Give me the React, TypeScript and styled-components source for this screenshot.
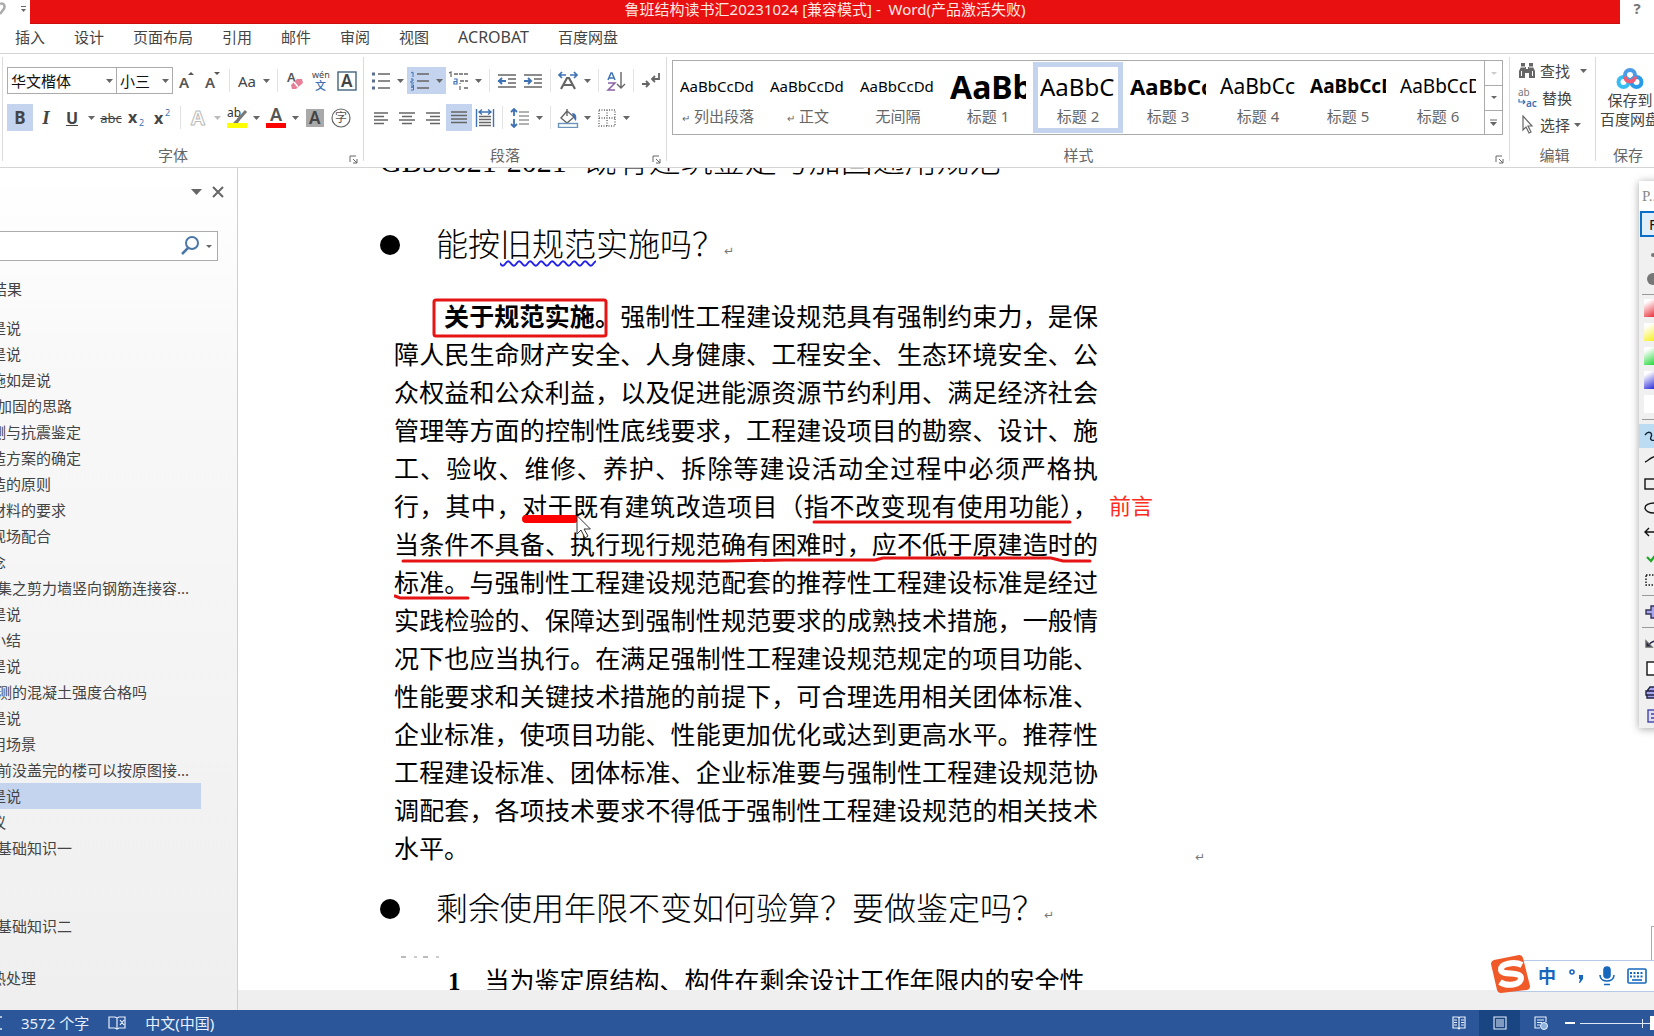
import React from 'react';
import styled, { createGlobalStyle, css } from 'styled-components';

const UI_FONT = '"Noto Sans", "Noto Sans CJK SC", sans-serif';
const DOC_FONT = '"Liberation Serif", "Noto Sans CJK SC", serif';

const color = {
  ink: '#444',
  muted: '#666',
  line: '#d4d4d4',
  frame: '#ababab',
  active: '#c5d4ee',
  blue: '#3f72b5',
  red: '#e61414',
  status: '#2b579a',
  statusActive: '#1a4583',
};

const GlobalStyle = createGlobalStyle`
  * { box-sizing: border-box; }
  html, body { margin: 0; height: 100%; overflow: hidden; background: #fff; }
  button, input, select { font: inherit; color: inherit; }
  button { border: 0; padding: 0; background: none; }
  ul { list-style: none; margin: 0; padding: 0; }
  p, h2 { margin: 0; font-weight: inherit; }
`;

const Shell = styled.div`
  height: 100vh;
  display: flex;
  flex-direction: column;
  overflow: hidden;
  font: 15px/20px ${UI_FONT};
  color: ${color.ink};
`;

/* ---------- title bar ---------- */
const TitleBar = styled.header`
  display: flex;
  flex: none;
  height: 24px;
`;
const QuickAccess = styled.div`
  flex: none;
  width: 30px;
  height: 20px;
  display: flex;
  justify-content: space-between;
`;
const Title = styled.div`
  flex: 1;
  background: #e81010;
  color: #ffe9e4;
  line-height: 18px;
  text-align: center;
  white-space: pre;
  border-bottom: 1px solid #c90c0c;
`;
const HelpButton = styled.button`
  flex: none;
  width: 34px;
  height: 16px;
  line-height: 16px;
  font-weight: 700;
  color: #777;
`;

/* ---------- tabs ---------- */
const Tabs = styled.nav`
  flex: none;
  display: flex;
  gap: 29px;
  height: 29px;
  padding: 0 0 4px 15px;
  align-items: center;
`;
const Tab = styled.button<{ $latin?: boolean }>`
  line-height: 24px;
  font-size: ${p => (p.$latin ? 16 : 15)}px;
  white-space: nowrap;
`;

/* ---------- ribbon ---------- */
const Ribbon = styled.section`
  flex: none;
  display: flex;
  height: 115px;
  padding-left: 2px;
  border-top: 1px solid ${color.line};
  border-bottom: 1px solid ${color.line};
  background: #fff;
`;
const Divider = styled.div`
  flex: none;
  width: 1px;
  margin: 3px 0 6px;
  background: #dcdcdc;
`;
const Group = styled.div<{ $w?: number; $pad?: string }>`
  display: flex;
  flex-direction: column;
  min-width: 0;
  ${p => (p.$w ? css`flex: none; width: ${p.$w}px;` : css`flex: 1;`)}
  padding: ${p => p.$pad ?? '13px 0 3px 4px'};
`;
const ToolRow = styled.div`
  display: flex;
  height: 27px;
  margin-bottom: 10px;
`;
const GroupFoot = styled.div`
  display: flex;
  align-items: center;
  height: 18px;
  margin-top: auto;
  color: ${color.muted};
  text-align: center;
`;
const GroupLabel = styled.span`
  flex: 1;
  padding-right: 4px;
`;
const Launcher = styled.button`
  width: 20px;
  height: 14px;
`;
const Tool = styled.button<{ $active?: boolean; $menu?: boolean }>`
  flex: none;
  display: grid;
  grid-template-columns: ${p => (p.$menu ? '26px 13px' : '26px')};
  align-items: center;
  justify-items: center;
  height: 27px;
  background: ${p => (p.$active ? color.active : 'transparent')};
`;
const Split = styled.div`
  flex: none;
  width: 1px;
  margin: 2px 4px;
  background: #e2e2e2;
`;
const Glyph = styled.span<{ $size?: number; $bold?: boolean; $italic?: boolean; $line?: string }>`
  font-size: ${p => p.$size ?? 18}px;
  line-height: 22px;
  font-weight: ${p => (p.$bold ? 700 : 400)};
  font-style: ${p => (p.$italic ? 'italic' : 'normal')};
  font-family: ${p => (p.$italic ? '"Liberation Serif", serif' : UI_FONT)};
  text-decoration: ${p => p.$line ?? 'none'};
`;
const Combo = styled.label<{ $w: number }>`
  flex: none;
  display: flex;
  align-items: center;
  width: ${p => p.$w}px;
  padding-right: 3px;
  border: 1px solid ${color.frame};
  & + & { border-left: 0; }
`;
const ComboSelect = styled.select`
  appearance: none;
  flex: 1;
  min-width: 0;
  height: 24px;
  padding: 0 0 0 3px;
  border: 0;
  background: none;
  color: #111;
`;

/* ---------- styles gallery ---------- */
const Gallery = styled.div`
  display: flex;
  width: 831px;
  height: 75px;
  border: 1px solid ${color.frame};
`;
const StyleItem = styled.button<{ $active?: boolean }>`
  flex: none;
  width: 90px;
  height: 71px;
  margin-top: 1px;
  border: 5px solid ${p => (p.$active ? color.active : 'transparent')};
  display: flex;
  flex-direction: column;
  align-items: center;
`;
const Preview = styled.span<{ $size: number; $bold?: boolean }>`
  width: 76px;
  height: 39px;
  line-height: 39px;
  overflow: hidden;
  white-space: nowrap;
  text-align: left;
  color: #000;
  font-size: ${p => p.$size}px;
  font-weight: ${p => (p.$bold ? 700 : 400)};
`;
const StyleName = styled.span`
  line-height: 20px;
  white-space: nowrap;
  color: ${color.muted};
`;
const StyleMark = styled.span`
  font-size: 10px;
  margin-right: 4px;
`;
const GalleryScroll = styled.div`
  margin-left: auto;
  width: 18px;
  display: grid;
  grid-template-rows: repeat(3, 1fr);
  border-left: 1px solid ${color.frame};
`;
const ScrollButton = styled.button`
  display: grid;
  place-items: center;
  & + & { border-top: 1px solid ${color.frame}; }
`;

/* ---------- edit + save ---------- */
const EditItem = styled.button`
  display: flex;
  align-items: center;
  gap: 4px;
  height: 27px;
  white-space: nowrap;
`;
const EditLabel = styled.span<{ $wide?: boolean }>`
  padding-right: ${p => (p.$wide ? 6 : 0)}px;
`;
const SaveButton = styled.button`
  display: flex;
  flex-direction: column;
  align-items: center;
  line-height: 19px;
  white-space: nowrap;
`;

/* ---------- navigation pane ---------- */
const Main = styled.div`
  flex: 1;
  min-height: 0;
  display: flex;
  position: relative;
`;
const NavPane = styled.aside`
  flex: none;
  width: 238px;
  overflow: hidden;
  border-right: 1px solid #cfcfcf;
  background: linear-gradient(#fff, #f8f8f8 25%, #efefef);
`;
const NavHead = styled.div`
  display: flex;
  justify-content: flex-end;
  align-items: center;
  gap: 9px;
  height: 48px;
  padding-right: 12px;
`;
const CloseButton = styled.button`
  display: grid;
  place-items: center;
`;
const SearchBox = styled.label`
  display: flex;
  align-items: center;
  gap: 6px;
  width: 218px;
  height: 30px;
  margin-top: 15px;
  padding-right: 5px;
  border: 1px solid ${color.frame};
  border-left: 0;
  background: #fff;
`;
const SearchInput = styled.input`
  flex: 1;
  min-width: 0;
  border: 0;
  outline: 0;
  background: none;
`;
const NavTab = styled.button`
  display: block;
  height: 26px;
  margin: 15px 0 13px -8px;
`;
const NavItem = styled.li<{ $deep?: boolean; $active?: boolean }>`
  height: 26px;
  line-height: 26px;
  width: 210px;
  margin-left: -9px;
  padding-left: ${p => (p.$deep ? 6 : 0)}px;
  white-space: nowrap;
  background: ${p => (p.$active ? color.active : 'transparent')};
`;

/* ---------- document ---------- */
const Viewport = styled.main`
  flex: 1;
  min-width: 0;
  display: flex;
  flex-direction: column;
  background: #efefef;
`;
const Page = styled.article`
  flex: 1;
  min-height: 0;
  margin-bottom: 20px;
  padding-left: 142px;
  overflow: hidden;
  background: #fff;
  color: #000;
  font-family: ${DOC_FONT};
`;
const StandardLine = styled.p`
  margin-top: -27px;
  font-size: 32px;
  font-weight: 300;
  line-height: 40px;
  white-space: nowrap;
`;
const Code = styled.span`
  font-size: 30px;
  margin-right: 18px;
`;
const Bullet = styled.h2<{ $gap: number }>`
  display: flex;
  align-items: center;
  margin-top: ${p => p.$gap}px;
  font-size: 32px;
  font-weight: 300;
  line-height: 40px;
  white-space: nowrap;
  &::before {
    content: '';
    width: 20px;
    height: 20px;
    margin-right: 36px;
    border-radius: 50%;
    background: #000;
  }
`;
const Wavy = styled.span`
  text-decoration: underline wavy #2222e8 2px;
  text-underline-offset: 4px;
`;
const Mark = styled.span`
  align-self: flex-end;
  font: 12px/28px "DejaVu Sans", sans-serif;
  color: #777;
`;
const Figure = styled.figure`
  position: relative;
  width: 704px;
  margin: 34px 0 0 14px;
  font-size: 25px;
`;
const Line = styled.p<{ $indent?: boolean; $last?: boolean }>`
  line-height: 38px;
  white-space: nowrap;
  padding-left: ${p => (p.$indent ? 50 : 0)}px;
  text-align: ${p => (p.$last ? 'left' : 'justify')};
  text-align-last: ${p => (p.$last ? 'left' : 'justify')};
`;
const Ink = styled.svg`
  position: absolute;
  left: 0;
  top: -2px;
  width: 780px;
  height: 570px;
  pointer-events: none;
`;
const Note = styled.span`
  position: absolute;
  left: 715px;
  top: 187px;
  font: 22px/38px ${UI_FONT};
  color: #ff2a20;
  white-space: nowrap;
`;
const FigureMark = styled(Mark)`
  position: absolute;
  left: 801px;
  bottom: -2px;
`;
const Residue = styled.div`
  height: 2px;
  width: 44px;
  margin: 27px 0 0 21px;
  background: repeating-linear-gradient(90deg, #bbb 0 5px, #fff 5px 13px, #ccc 13px 16px, #fff 16px 22px);
`;
const Clause = styled.p`
  display: flex;
  gap: 24px;
  margin: 5px 0 0 68px;
  font-size: 25px;
  line-height: 38px;
  white-space: nowrap;
`;
const ScrollThumb = styled.div`
  position: absolute;
  right: 0;
  bottom: 49px;
  width: 3px;
  height: 35px;
  border: 1px solid #aaa;
  border-right: 0;
`;

/* ---------- drawing palette ---------- */
const Palette = styled.aside`
  position: absolute;
  right: -39px;
  top: 13px;
  width: 54px;
  background: #f0f0f0;
  box-shadow: 0 1px 8px rgba(0, 0, 0, 0.35);
`;
const PaletteTitle = styled.div`
  height: 30px;
  padding-left: 3px;
  line-height: 30px;
  color: #888;
  background: #fff;
  font-family: "Liberation Serif", serif;
`;
const PenName = styled.button`
  display: block;
  width: 52px;
  height: 26px;
  margin: 0 0 6px 1px;
  padding-left: 7px;
  border: 2px solid #0a6fc8;
  background: #e1effa;
  color: #111;
  text-align: left;
  line-height: 20px;
`;
const PaletteTool = styled.button<{ $active?: boolean }>`
  display: flex;
  align-items: center;
  width: 54px;
  height: 24px;
  padding-left: 4px;
  background: ${p => (p.$active ? '#bcdcf4' : 'transparent')};
`;
const Swatch = styled.button<{ $c: string }>`
  display: block;
  width: 44px;
  height: 18px;
  margin: 3px 0 6px 5px;
  background: linear-gradient(150deg, #fff 10%, ${p => p.$c} 55%);
`;
const PaletteRule = styled.div`
  height: 1px;
  margin: 3px 0 4px 3px;
  background: #999;
`;

/* ---------- input method bar ---------- */
const ImeBar = styled.div`
  position: absolute;
  right: 0;
  bottom: 18px;
  display: flex;
  align-items: center;
  width: 155px;
  height: 32px;
  padding-left: 33px;
  border: 1px solid #b5c9e8;
  border-width: 1px 0;
  background: #fff;
`;
const ImeLogo = styled.svg`
  position: absolute;
  left: -9px;
  top: -7px;
`;
const ImeButton = styled.button`
  flex: none;
  display: grid;
  place-items: center;
  width: 30px;
  height: 30px;
  color: #1768bd;
  font-size: 18px;
  font-weight: 700;
`;

/* ---------- status bar ---------- */
const StatusBar = styled.footer`
  flex: none;
  display: flex;
  align-items: stretch;
  height: 26px;
  overflow: hidden;
  background: ${color.status};
  color: #e8f0fc;
`;
const StatusText = styled.button`
  white-space: nowrap;
`;
const StatusLeft = styled.div`
  display: flex;
  align-items: center;
  gap: 19px;
`;
const StatusRight = styled.div`
  display: flex;
  align-items: center;
  margin-left: auto;
  margin-right: -54px;
`;
const ViewButton = styled.button<{ $active?: boolean }>`
  display: grid;
  place-items: center;
  width: 41px;
  height: 26px;
  background: ${p => (p.$active ? color.statusActive : 'transparent')};
`;
const ZoomOut = styled.button`
  width: 19px;
  height: 26px;
  padding-left: 4px;
  display: grid;
  align-items: center;
`;
const ZoomRange = styled.input`
  appearance: none;
  width: 128px;
  height: 26px;
  margin: 0;
  background:
    linear-gradient(#dfe8f5, #dfe8f5) 62px 50% / 1px 9px no-repeat,
    linear-gradient(#dfe8f5, #dfe8f5) 0 50% / 100% 1px no-repeat;
  &::-webkit-slider-thumb {
    appearance: none;
    width: 6px;
    height: 14px;
    background: #fff;
  }
`;

/* ---------- drawings ---------- */
const Caret = ({ c = '#666', w = 7 }: { c?: string; w?: number }) => (
  <svg width={w} height={Math.ceil(w / 2)} viewBox="0 0 8 4" preserveAspectRatio="none"><path d="M0 0h8L4 4z" fill={c} /></svg>
);
const Svg = ({ w = 20, h = 20, children }: { w?: number; h?: number; children: React.ReactNode }) => (
  <svg width={w} height={h} viewBox={`0 0 ${w} ${h}`} fill="none" stroke="#666" strokeWidth="1.4">{children}</svg>
);
const t = { stroke: 'none', fontFamily: 'Noto Sans, sans-serif' };

const GrowIcon = ({ up }: { up?: boolean }) => (
  <Svg><text x="3" y="17" fontSize="15" fontWeight="600" fill="#555" {...t}>A</text>
    <path d={up ? 'M12 4l3-3 3 3z' : 'M12 1h6l-3 3z'} fill="#555" stroke="none" /></Svg>
);
const EraserIcon = () => (
  <Svg><text x="2" y="11" fontSize="13" fontWeight="600" fill="#555" {...t}>A</text>
    <path d="M6 14l6-6 5 0 1 4-7 6-4 0z" fill="#e77f97" stroke="none" /><path d="M9 11l4 5" stroke="#fff" /></Svg>
);
const PinyinIcon = () => (
  <Svg w={22}><text x="2" y="7" fontSize="9" fill="#444" {...t}>wén</text>
    <text x="5" y="19" fontSize="11" fontWeight="500" fill={color.blue} {...t} fontFamily="Noto Sans CJK SC">文</text></Svg>
);
const BoxedA = () => (
  <Svg w={20} h={20}><rect x="1" y="1" width="18" height="18" stroke="#44647d" />
    <text x="4" y="16" fontSize="17" fontWeight="600" fill="#444" {...t}>A</text></Svg>
);
const OutlineA = () => (
  <Svg><text x="3" y="17" fontSize="20" fontWeight="700" fill="#fff" fontFamily="Noto Sans" stroke="#bbb" strokeWidth="1">A</text></Svg>
);
const HighlightIcon = () => (
  <Svg w={22} h={22}><text x="1" y="10" fontSize="12" fill="#333" {...t}>ab</text>
    <path d="M20 4L12 13" strokeWidth="3" stroke="#777" /><path d="M12 11l-5 5h5l2-3z" fill="#777" stroke="none" />
    <rect x="1" y="16" width="20" height="5" fill="#ff0" stroke="none" /></Svg>
);
const FontColorIcon = () => (
  <Svg w={22} h={22}><text x="5" y="14" fontSize="18" fontWeight="600" fill="#555" {...t}>A</text>
    <rect x="1" y="16" width="20" height="5" fill="#f00" stroke="none" /></Svg>
);
const ShadedA = () => (
  <Svg w={18} h={18}><rect width="18" height="18" fill="#a9a9a9" stroke="none" />
    <text x="3" y="15" fontSize="17" fontWeight="600" fill="#444" {...t}>A</text></Svg>
);
const CircledIcon = () => (
  <Svg><circle cx="10" cy="10" r="9" strokeWidth="1.2" />
    <text x="4" y="14" fontSize="12" fill="#555" {...t} fontFamily="Noto Sans CJK SC">字</text></Svg>
);
const BulletsIcon = () => (
  <Svg><path d="M7 3h12M7 10h12M7 17h12" /><path d="M1 3h3M1 10h3M1 17h3" strokeWidth="3" stroke="#5a6f8f" /></Svg>
);
const NumberIcon = () => (
  <Svg><path d="M7 3h12M7 10h12M7 17h12" />
    <path d="M1 2l2-1v5M1 8h2v2H1v2h3M1 14h2.500v2H1h2.500v3H1" stroke={color.blue} strokeWidth="1" /></Svg>
);
const MultiIcon = () => (
  <Svg w={22}><path d="M6 3h14M12 10h8M16 17h4" strokeDasharray="4 1" />
    <path d="M1 2l2-1v5M12 15v4M12 12v1" strokeWidth="1.200" />
    <path d="M6 8h3v5H6v-2.500h3" stroke={color.blue} strokeWidth="1.200" /></Svg>
);
const IndentIcon = ({ right }: { right?: boolean }) => (
  <Svg><path d="M1 4h18M11 8h8M11 12h8M1 16h18" strokeWidth="1.3" />
    <path d={right ? 'M1 10h7M5 7l3 3-3 3' : 'M9 10H1M5 7l-3 3 3 3'} stroke={color.blue} strokeWidth="2" /></Svg>
);
const AsianIcon = () => (
  <Svg w={22}><path d="M4 18L10 7h2l6 11M7 14h8" strokeWidth="2.200" />
    <path d="M9 4H2M5 1L2 4l3 3M13 4h7M17 1l3 3-3 3" stroke={color.blue} strokeWidth="1.7" /></Svg>
);
const SortIcon = () => (
  <Svg><path d="M2 9l3-7h1l3 7M3 7h5" stroke={color.blue} strokeWidth="1.500" />
    <path d="M2 12h7l-7 7h7" stroke="#8a62a8" strokeWidth="1.500" /><path d="M15 1v16M11 13l4 4 4-4" /></Svg>
);
const MarksIcon = () => (
  <Svg><path d="M18 2v6h-7M14 5l-3 3 3 3M1 13h7M5 10l3 3-3 3" strokeWidth="1.8" /></Svg>
);
const AlignIcon = ({ d, n = 18 }: { d: string; n?: number }) => <Svg w={n} h={18}><path d={d} strokeWidth="1.3" /></Svg>;
const DistributeIcon = () => (
  <Svg><path d="M1.5 1v18M18.500 1v18" stroke={color.blue} /><path d="M4 8.500h12M4 11.500h12M4 14.500h12M4 17.500h12" />
    <path d="M4 4h12M7 1.500L4 4l3 2.500M13 1.500L16 4l-3 2.500" stroke={color.blue} /></Svg>
);
const SpacingIcon = () => (
  <Svg><path d="M9 4h10M9 8h10M9 12h10M9 16h10" strokeWidth="1.2" />
    <path d="M4 1v7M1 4l3-3 3 3M4 11v8M1 16l3 3 3-3" stroke={color.blue} strokeWidth="1.8" /></Svg>
);
const BucketIcon = () => (
  <Svg w={22}><path d="M10 3l7 6-7 6-6-5zM10 8V1" /><path d="M15 5c4 0 5 3 4 8-2-1-2-4-3-5z" fill={color.blue} stroke="none" />
    <rect x="1.500" y="15.500" width="19" height="4" stroke="#6a94b8" fill="#fff" /></Svg>
);
const BorderIcon = () => (
  <Svg w={18} h={18}><path d="M1 1h16v16H1zM9 1v16M1 9h16" strokeDasharray="1 1.500" /></Svg>
);
const LaunchIcon = () => (
  <Svg w={9} h={9}><path d="M1 7V1h6M4 4l4 4M8 4v4H4" strokeWidth="1" /></Svg>
);
const BinocularIcon = () => (
  <Svg w={18} h={17}>
    <path d="M1 16V9l2-4V1h4v4h1v2h2V5h1V1h4v4l2 4v7h-6v-5H7v5z" fill="#666" stroke="none" />
    <path d="M3.500 9v5M14.500 9v5M3 5h4M11 5h4" stroke="#fff" strokeWidth="1" />
  </Svg>
);
const ReplaceIcon = () => (
  <Svg><text x="0" y="8" fontSize="10" fill="#777" {...t}>ab</text><text x="8" y="19" fontSize="10" fontWeight="600" fill={color.blue} {...t}>ac</text>
    <path d="M1 11v3h6M5 12l2 2-2 2" stroke={color.blue} strokeWidth="1.200" /></Svg>
);
const PointerIcon = () => (
  <Svg w={18} h={19}><path d="M5 1v14l3-3 3 6 2-1-3-6h4z" strokeWidth="1.200" /></Svg>
);
const CloudDiskIcon = () => (
  <Svg w={28} h={24}><circle cx="7.500" cy="15" r="5" stroke="#37bdf0" strokeWidth="4" /><circle cx="20.500" cy="15" r="5" stroke="#2a9be8" strokeWidth="4" />
    <circle cx="14" cy="8" r="5" stroke="#4a9be8" strokeWidth="4" /><path d="M9 9.500a5 5 0 0 0 10 0" stroke="#ee5d76" strokeWidth="4" /></Svg>
);

/* ---------- content ---------- */
const tabs = ['插入', '设计', '页面布局', '引用', '邮件', '审阅', '视图', 'ACROBAT', '百度网盘'];

const gallery = [
  { sample: 'AaBbCcDd', name: '列出段落', size: 15, mark: true },
  { sample: 'AaBbCcDd', name: '正文', size: 15, mark: true },
  { sample: 'AaBbCcDd', name: '无间隔', size: 15 },
  { sample: 'AaBb', name: '标题 1', size: 32, bold: true },
  { sample: 'AaBbC', name: '标题 2', size: 24, active: true },
  { sample: 'AaBbCc', name: '标题 3', size: 22, bold: true },
  { sample: 'AaBbCc', name: '标题 4', size: 21 },
  { sample: 'AaBbCcD', name: '标题 5', size: 19, bold: true },
  { sample: 'AaBbCcD', name: '标题 6', size: 19 },
];

const outline: { text: string; deep?: boolean; active?: boolean }[] = [
  { text: '是说' }, { text: '是说' }, { text: '施如是说' }, { text: '加固的思路', deep: true },
  { text: '测与抗震鉴定' }, { text: '造方案的确定' }, { text: '造的原则' }, { text: '材料的要求' },
  { text: '现场配合' }, { text: '念' }, { text: '集之剪力墙竖向钢筋连接容...', deep: true }, { text: '是说' },
  { text: '小结' }, { text: '是说' }, { text: '测的混凝土强度合格吗', deep: true }, { text: '是说' },
  { text: '用场景' }, { text: '前没盖完的楼可以按原图接...', deep: true }, { text: '是说', active: true }, { text: '议' },
  { text: '基础知识一', deep: true }, { text: '' }, { text: '' }, { text: '基础知识二', deep: true }, { text: '' }, { text: '热处理' },
];

const lines = [
  '障人民生命财产安全、人身健康、工程安全、生态环境安全、公',
  '众权益和公众利益，以及促进能源资源节约利用、满足经济社会',
  '管理等方面的控制性底线要求，工程建设项目的勘察、设计、施',
  '工、验收、维修、养护、拆除等建设活动全过程中必须严格执',
  '行，其中，对于既有建筑改造项目（指不改变现有使用功能），',
  '当条件不具备、执行现行规范确有困难时，应不低于原建造时的',
  '标准。与强制性工程建设规范配套的推荐性工程建设标准是经过',
  '实践检验的、保障达到强制性规范要求的成熟技术措施，一般情',
  '况下也应当执行。在满足强制性工程建设规范规定的项目功能、',
  '性能要求和关键技术措施的前提下，可合理选用相关团体标准、',
  '企业标准，使项目功能、性能更加优化或达到更高水平。推荐性',
  '工程建设标准、团体标准、企业标准要与强制性工程建设规范协',
  '调配套，各项技术要求不得低于强制性工程建设规范的相关技术',
];

const Foot = ({ label, launcher = true }: { label: string; launcher?: boolean }) => (
  <GroupFoot>
    <GroupLabel>{label}</GroupLabel>
    {launcher && <Launcher aria-label={`${label}设置`}><LaunchIcon /></Launcher>}
  </GroupFoot>
);

const FontGroup = () => (
  <Group $w={360}>
    <ToolRow>
      <Combo $w={110}><ComboSelect aria-label="字体"><option>华文楷体</option></ComboSelect><Caret /></Combo>
      <Combo $w={56}><ComboSelect aria-label="字号"><option>小三</option></ComboSelect><Caret /></Combo>
      <Tool><GrowIcon up /></Tool>
      <Tool><GrowIcon /></Tool>
      <Split />
      <Tool $menu><Glyph $size={15}>Aa</Glyph><Caret /></Tool>
      <Split />
      <Tool><EraserIcon /></Tool>
      <Tool><PinyinIcon /></Tool>
      <Tool><BoxedA /></Tool>
    </ToolRow>
    <ToolRow>
      <Tool $active><Glyph $size={17} $bold>B</Glyph></Tool>
      <Tool><Glyph $size={19} $bold $italic>I</Glyph></Tool>
      <Tool $menu><Glyph $size={16} $bold $line="underline">U</Glyph><Caret /></Tool>
      <Tool><Glyph $size={13} $line="line-through">abc</Glyph></Tool>
      <Tool><Svg><text x="1" y="15" fontSize="16" fontWeight="700" fill="#444" {...t}>x</text><text x="12" y="18" fontSize="9" fill={color.blue} {...t}>2</text></Svg></Tool>
      <Tool><Svg><text x="1" y="16" fontSize="16" fontWeight="700" fill="#444" {...t}>x</text><text x="12" y="8" fontSize="9" fill={color.blue} {...t}>2</text></Svg></Tool>
      <Split />
      <Tool $menu><OutlineA /><Caret c="#bbb" /></Tool>
      <Tool $menu><HighlightIcon /><Caret /></Tool>
      <Tool $menu><FontColorIcon /><Caret /></Tool>
      <Tool><ShadedA /></Tool>
      <Tool><CircledIcon /></Tool>
    </ToolRow>
    <Foot label="字体" />
  </Group>
);

const ParagraphGroup = () => (
  <Group $w={302}>
    <ToolRow>
      <Tool $menu><BulletsIcon /><Caret /></Tool>
      <Tool $menu $active><NumberIcon /><Caret /></Tool>
      <Tool $menu><MultiIcon /><Caret /></Tool>
      <Split />
      <Tool><IndentIcon /></Tool>
      <Tool><IndentIcon right /></Tool>
      <Split />
      <Tool $menu><AsianIcon /><Caret /></Tool>
      <Split />
      <Tool><SortIcon /></Tool>
      <Split />
      <Tool><MarksIcon /></Tool>
    </ToolRow>
    <ToolRow>
      <Tool><AlignIcon d="M2 4h14M2 7.500h10M2 11h14M2 14.500h10" /></Tool>
      <Tool><AlignIcon d="M1 4h16M4 7.500h10M1 11h16M4 14.500h10" /></Tool>
      <Tool><AlignIcon d="M2 4h14M6 7.500h10M2 11h14M6 14.500h10" /></Tool>
      <Tool $active><AlignIcon d="M1 3h16M1 6.500h16M1 10h16M1 13.500h16" /></Tool>
      <Tool><DistributeIcon /></Tool>
      <Split />
      <Tool $menu><SpacingIcon /><Caret /></Tool>
      <Split />
      <Tool $menu><BucketIcon /><Caret /></Tool>
      <Tool $menu><BorderIcon /><Caret /></Tool>
    </ToolRow>
    <Foot label="段落" />
  </Group>
);

const StylesGroup = () => (
  <Group $pad="6px 0 3px 5px">
    <Gallery>
      {gallery.map(g => (
        <StyleItem key={g.name} $active={g.active}>
          <Preview $size={g.size} $bold={g.bold}>{g.sample}</Preview>
          <StyleName>{g.mark && <StyleMark>↵</StyleMark>}{g.name}</StyleName>
        </StyleItem>
      ))}
      <GalleryScroll>
        <ScrollButton aria-label="上一行"><Caret c="#ccc" w={6} /></ScrollButton>
        <ScrollButton aria-label="下一行"><Caret w={6} /></ScrollButton>
        <ScrollButton aria-label="更多样式"><Svg w={7} h={7}><path d="M0 1h7" strokeWidth="1" /><path d="M0 3h7L3.500 7z" fill="#666" stroke="none" /></Svg></ScrollButton>
      </GalleryScroll>
    </Gallery>
    <Foot label="样式" />
  </Group>
);

const DrawingPalette = () => (
  <Palette>
    <PaletteTitle>P..</PaletteTitle>
    <PenName>F</PenName>
    <PaletteTool aria-label="细"><Svg w={24}><circle cx="10" cy="10" r="2" fill="#777" stroke="none" /></Svg></PaletteTool>
    <PaletteTool aria-label="粗"><Svg w={24}><circle cx="10" cy="10" r="6" fill="#777" stroke="none" /></Svg></PaletteTool>
    <PaletteRule />
    {['#e8303a', '#f6f020', '#25d83a', '#2a2ad8', '#fff'].map(c => <Swatch key={c} $c={c} aria-label={c} />)}
    <PaletteRule />
    <PaletteTool $active aria-label="曲线"><Svg w={24}><path d="M2 9c4-5 8-2 6 2s4 5 8 0" stroke="#123" /></Svg></PaletteTool>
    <PaletteTool aria-label="直线"><Svg w={24}><path d="M2 12c4-1 5-6 14-6" stroke="#111" /></Svg></PaletteTool>
    <PaletteTool aria-label="矩形"><Svg w={24}><rect x="2" y="5" width="18" height="10" stroke="#111" /></Svg></PaletteTool>
    <PaletteTool aria-label="椭圆"><Svg w={24}><ellipse cx="11" cy="10" rx="9" ry="5" stroke="#111" /></Svg></PaletteTool>
    <PaletteTool aria-label="箭头"><Svg w={24}><path d="M2 10h18M6 6l-4 4 4 4" stroke="#111" /></Svg></PaletteTool>
    <PaletteTool aria-label="勾选"><Svg w={24}><path d="M4 11l4 4 8-11" stroke="#22a52a" strokeWidth="2.200" /></Svg></PaletteTool>
    <PaletteTool aria-label="选区"><Svg w={24}><rect x="3" y="5" width="18" height="10" stroke="#111" strokeDasharray="1.500 1.500" /></Svg></PaletteTool>
    <PaletteRule />
    <PaletteTool aria-label="移动"><Svg w={24}><path d="M8 4h4v4h4v4h-4v4H8v-4H3V8h5z" fill="#a6a6ee" stroke="#335" /></Svg></PaletteTool>
    <PaletteRule />
    <PaletteTool aria-label="撤销"><Svg w={24}><path d="M5 12c3-5 8-6 13-4" stroke="#224" /><path d="M3 7v6h6z" fill="#224" /></Svg></PaletteTool>
    <PaletteTool aria-label="空白"><Svg w={24}><rect x="4" y="4" width="16" height="13" stroke="#111" fill="#fff" /></Svg></PaletteTool>
    <PaletteTool aria-label="打印"><Svg w={24}><path d="M7 5h12l-2 4H4zM3 9h16v4H3zM4 13h14v3H4z" fill="#a6a6ee" stroke="#224" /></Svg></PaletteTool>
    <PaletteTool aria-label="保存"><Svg w={24}><rect x="5" y="4" width="16" height="12" stroke="#44a" fill="#dde" /><path d="M8 8h10M8 12h10" stroke="#44a" /></Svg></PaletteTool>
  </Palette>
);

const InputMethodBar = () => (
  <ImeBar>
    <ImeLogo width="42" height="42" viewBox="0 0 42 42">
      <path d="M4 6L29 1q3 0 4 3l7 28q0 3-3 4L11 39q-3 0-4-3L1 10q0-3 3-4z" fill="#ef5a28" />
      <path d="M32 11C24 7 10 10 11 16c1 6 20 1 20 8 0 7-14 9-21 4" stroke="#fff" strokeWidth="6" fill="none" />
    </ImeLogo>
    <ImeButton>中</ImeButton>
    <ImeButton aria-label="标点"><svg width="18" height="18" viewBox="0 0 18 18"><circle cx="4" cy="5" r="2" fill="none" stroke="#1768bd" strokeWidth="1.600" /><path d="M11 8h4v4l-3 4h-1l1-4h-1z" fill="#1768bd" /></svg></ImeButton>
    <ImeButton aria-label="语音"><svg width="16" height="20" viewBox="0 0 16 20" fill="none" stroke="#1768bd" strokeWidth="1.600"><rect x="5" y="1" width="6" height="11" rx="3" fill="#1768bd" /><path d="M1 9c0 8 14 8 14 0M5 18.500h6" /></svg></ImeButton>
    <ImeButton aria-label="键盘"><svg width="20" height="16" viewBox="0 0 20 16" fill="none" stroke="#1768bd" strokeWidth="1.600"><rect x="1" y="1" width="18" height="14" rx="1" /><path d="M3 5h14M3 8.500h14" strokeDasharray="2 1.500" strokeWidth="2" /><path d="M5 12h10" /></svg></ImeButton>
  </ImeBar>
);

export default function App() {
  return (
    <Shell>
      <GlobalStyle />
      <TitleBar>
        <QuickAccess>
          <Svg w={8} h={18}><path d="M0 4c4-2 6 3 3 6l-3 4" stroke="#aaa" strokeWidth="2.500" /></Svg>
          <Svg w={10} h={18}><path d="M1 6.500h5" strokeWidth="1" /><path d="M1 9h5l-2.500 3z" fill="#666" stroke="none" /></Svg>
        </QuickAccess>
        <Title>{'鲁班结构读书汇20231024 [兼容模式] -  Word(产品激活失败)'}</Title>
        <HelpButton>?</HelpButton>
      </TitleBar>
      <Tabs>{tabs.map(x => <Tab key={x} $latin={x === 'ACROBAT'}>{x}</Tab>)}</Tabs>

      <Ribbon>
        <Divider />
        <FontGroup />
        <Divider />
        <ParagraphGroup />
        <Divider />
        <StylesGroup />
        <Divider />
        <Group $w={85} $pad="3px 0 3px 8px">
          <EditItem><BinocularIcon /><EditLabel $wide>查找</EditLabel><Caret /></EditItem>
          <EditItem><ReplaceIcon /><EditLabel>替换</EditLabel></EditItem>
          <EditItem><PointerIcon /><EditLabel>选择</EditLabel><Caret /></EditItem>
          <Foot label="编辑" launcher={false} />
        </Group>
        <Divider />
        <Group $w={58} $pad="13px 0 3px 10px">
          <SaveButton><CloudDiskIcon /><span>保存到</span><span>百度网盘</span></SaveButton>
          <Foot label="保存" launcher={false} />
        </Group>
      </Ribbon>

      <Main>
        <NavPane>
          <NavHead>
            <Caret w={11} />
            <CloseButton aria-label="关闭"><Svg w={14} h={14}><path d="M2 2l10 10M12 2L2 12" strokeWidth="2" /></Svg></CloseButton>
          </NavHead>
          <SearchBox>
            <SearchInput aria-label="搜索文档" />
            <Svg><circle cx="12" cy="7" r="6" stroke="#4a76a8" strokeWidth="2" /><path d="M8 12l-6 6" stroke="#4a76a8" strokeWidth="2.500" /></Svg>
            <Caret w={6} />
          </SearchBox>
          <NavTab>结果</NavTab>
          <ul>
            {outline.map((o, i) => <NavItem key={i} $deep={o.deep} $active={o.active}>{o.text}</NavItem>)}
          </ul>
        </NavPane>

        <Viewport>
          <Page>
            <StandardLine><Code>GB55021-2021</Code>既有建筑鉴定与加固通用规范</StandardLine>
            <Bullet $gap={43}><span>能按<Wavy>旧规范</Wavy>实施吗？</span><Mark>↵</Mark></Bullet>
            <Figure>
              <Line $indent><b>关于规范实施。</b>强制性工程建设规范具有强制约束力，是保</Line>
              {lines.map(l => <Line key={l}>{l}</Line>)}
              <Line $last>水平。</Line>
              <Note>前言</Note>
              <FigureMark>↵</FigureMark>
              <Ink fill="none" stroke={color.red} strokeWidth="3" strokeLinecap="round">
                <rect x="40" y="3" width="172" height="36" rx="2" />
                <path d="M132 222h48" strokeWidth="8" stroke="#f00" />
                <path d="M420 225h256" />
                <path d="M9 264h322l60-1h90l8-2h168l12 3h27" />
                <path d="M1 299l5 2h68" />
                <path d="M183 219v18l4-4 4 8 3-2-4-7h6z" fill="#fff" stroke="#333" strokeWidth="1" />
              </Ink>
            </Figure>
            <Bullet $gap={20}><span>剩余使用年限不变如何验算？要做鉴定吗？</span><Mark>↵</Mark></Bullet>
            <Residue />
            <Clause><b>1</b><span>当为鉴定原结构、构件在剩余设计工作年限内的安全性</span></Clause>
          </Page>
        </Viewport>
        <ScrollThumb />
        <DrawingPalette />
        <InputMethodBar />
      </Main>

      <StatusBar>
        <StatusLeft>
          <Svg w={2} h={16}><path d="M0 2h2M0 14h2" stroke="#dfe8f5" /></Svg>
          <StatusText>3572 个字</StatusText>
          <Svg w={18} h={16}><path d="M9 3L7 2H1v11h6l2 1 2-1h6V2h-6L9 3v11M12 5l4 5M16 5l-4 5" stroke="#e8f0fc" strokeWidth="1.200" /></Svg>
          <StatusText>中文(中国)</StatusText>
        </StatusLeft>
        <StatusRight>
          <ViewButton aria-label="阅读视图"><Svg w={14} h={14}><path d="M7 2v11M1 1h5l1 1 1-1h5v11H8l-1 1-1-1H1zM2 4h3M2 6.500h3M2 9h3M9 4h3M9 6.500h3M9 9h3" stroke="#e8f0fc" strokeWidth="1.200" /></Svg></ViewButton>
          <ViewButton $active aria-label="页面视图"><Svg w={14} h={14}><path d="M1 1h12v12H1zM3 4h8M3 6h8M3 8h8M3 10h8" stroke="#e8f0fc" strokeWidth="1.100" /></Svg></ViewButton>
          <ViewButton aria-label="Web 版式"><Svg w={14} h={14}><path d="M6 12H1V1h11v5M3 4h7M3 6.500h5M3 9h3" stroke="#e8f0fc" strokeWidth="1.100" /><circle cx="10" cy="10" r="3.500" fill="#8fb0dc" stroke="#e8f0fc" strokeWidth="1" /></Svg></ViewButton>
          <ZoomOut aria-label="缩小"><Svg w={10} h={4}><path d="M0 2h10" stroke="#fff" strokeWidth="2" /></Svg></ZoomOut>
          <ZoomRange type="range" aria-label="显示比例" min={0} max={100} defaultValue={57} />
        </StatusRight>
      </StatusBar>
    </Shell>
  );
}
